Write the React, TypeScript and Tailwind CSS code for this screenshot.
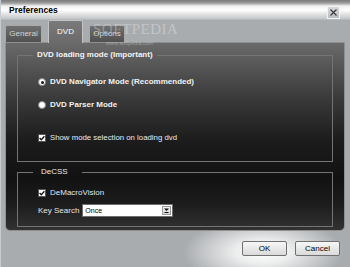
import React from "react";

function Radio({ checked }: { checked?: boolean }) {
  return (
    <div className="w-[8px] h-[8px] rounded-full bg-white border border-[#8a8a8a] flex items-center justify-center shrink-0">
      {checked && <div className="w-[3px] h-[3px] rounded-full bg-[#1a1a1a]" />}
    </div>
  );
}

function Check() {
  return (
    <div className="w-[8px] h-[8px] bg-white border border-[#555] flex items-center justify-center shrink-0">
      <svg width="6" height="6" viewBox="0 0 6 6">
        <path d="M0.6 3 L2.3 4.7 L5.4 1.2" stroke="#111" strokeWidth="1.3" fill="none" />
      </svg>
    </div>
  );
}

export default function App() {
  return (
    <div className="relative w-[350px] h-[267px] overflow-hidden border-l border-[#c9cccf] font-['Liberation_Sans',Arial,sans-serif] text-[8px] leading-[10px] bg-[radial-gradient(ellipse_80px_34px_at_262px_252px,#ffffff_0%,#eceded_35%,#a9acaf_100%)]">
      {/* title bar */}
      <div className="h-[20px] flex justify-between pl-[8px] pr-[10px] border-b border-[#b6b9bc] bg-[linear-gradient(to_bottom,#7a7a7a_0px,#9b9b9b_3px,#f0f0f0_6px,#ffffff_10px,#e4e4e4_14px,#c2c4c6_19px)]">
        <span className="self-center font-bold text-[8.5px] text-black">Preferences</span>
        <div className="self-end w-[13px] h-[13px] border border-[#f4f4f4] bg-[linear-gradient(to_bottom,#d6d8da,#bcbfc2)] flex items-center justify-center">
          <svg width="7" height="7" viewBox="0 0 7 7">
            <path d="M0.5 0.5 L6.5 6.5 M6.5 0.5 L0.5 6.5" stroke="#3a3a3a" strokeWidth="1.2" />
          </svg>
        </div>
      </div>

      {/* tabs */}
      <div className="h-[22px] flex items-end pl-[4px] gap-[6px]">
        <div className="w-[37px] h-[17px] rounded-t-[2px] border border-b-0 border-[#a9a9a9] bg-[linear-gradient(to_bottom,#707070,#505050)] text-[#d4d4d4] flex items-center justify-center">
          General
        </div>
        <div className="relative z-10 w-[35px] h-[23px] mb-[-1px] rounded-t-[2px] border border-b-0 border-[#c4c4c4] bg-[linear-gradient(to_bottom,#7a7a7a,#6a6a6a)] text-white flex items-center justify-center">
          DVD
        </div>
        <div className="w-[36px] h-[17px] rounded-t-[2px] border border-b-0 border-[#a9a9a9] bg-[linear-gradient(to_bottom,#707070,#505050)] text-[#d4d4d4] flex items-center justify-center">
          Options
        </div>
      </div>

      {/* panel */}
      <div className="ml-[4px] mr-[5px] h-[189px] border border-[#8f8f8f] rounded-b-[5px] px-[11px] flex flex-col bg-[linear-gradient(to_bottom,#6a6a6a_0%,#3c3c3c_28%,#1c1c1c_52%,#121212_72%,#1c1c1c_86%,#323232_100%)]">
        <fieldset className="mt-[7px] h-[112px] border border-[#747474] m-0 p-0 min-w-0">
          <legend className="ml-[15px] px-[4px] font-bold text-[#f4f4f4] leading-[10px]">
            DVD loading mode (Important)
          </legend>
          <div className="pl-[20px] pt-[16px] flex flex-col">
            <div className="h-[12px] flex items-center gap-[4px] font-bold text-[#f2f2f2]">
              <Radio checked />
              <span>DVD Navigator Mode (Recommended)</span>
            </div>
            <div className="mt-[11px] h-[12px] flex items-center gap-[4px] font-bold text-[#f2f2f2]">
              <Radio />
              <span>DVD Parser Mode</span>
            </div>
            <div className="mt-[21px] h-[12px] flex items-center gap-[4px] text-[#e6ebf5] text-[7.8px]">
              <Check />
              <span>Show mode selection on loading dvd</span>
            </div>
          </div>
        </fieldset>

        <fieldset className="mt-[5px] h-[60px] border border-[#747474] m-0 p-0 min-w-0">
          <legend className="ml-[15px] pl-[8px] pr-[14px] text-[#ececec] leading-[10px]">DeCSS</legend>
          <div className="pl-[20px] pt-[10px] flex flex-col">
            <div className="h-[12px] flex items-center gap-[4px] text-[#dfe6f5]">
              <Check />
              <span>DeMacroVision</span>
            </div>
            <div className="mt-[5px] h-[13px] flex items-center text-[#e4e4e4]">
              <span>Key Search</span>
              <div className="ml-[3px] w-[91px] h-[13px] bg-white border border-[#6e6e6e] flex items-center justify-between pl-[2px] pr-[1px]">
                <span className="text-[7px] text-black">Once</span>
                <div className="w-[9px] h-[9px] bg-[linear-gradient(to_bottom,#f2f2f2,#d8d8d8)] border border-[#9a9a9a] flex items-center justify-center">
                  <svg width="5" height="5" viewBox="0 0 5 5">
                    <path d="M0 0.5 L5 0.5 L2.5 3 Z" fill="#111" />
                    <rect x="0.5" y="4" width="4" height="1" fill="#111" />
                  </svg>
                </div>
              </div>
            </div>
          </div>
        </fieldset>
      </div>

      {/* buttons */}
      <div className="flex justify-end gap-[8px] pr-[10px] mt-[10px]">
        <button className="w-[45px] h-[15px] rounded-[2px] border border-[#707070] bg-[linear-gradient(to_bottom,#f7f7f7,#dadada)] text-black text-[8px] leading-[13px]">
          OK
        </button>
        <button className="w-[45px] h-[15px] rounded-[2px] border border-[#707070] bg-[linear-gradient(to_bottom,#f7f7f7,#dadada)] text-black text-[8px] leading-[13px]">
          Cancel
        </button>
      </div>

      {/* watermark */}
      <div className="absolute left-[92px] top-[21px] font-['Liberation_Serif',serif] text-[15px] leading-[16px] tracking-[0.5px] text-white/30 pointer-events-none">
        SOFTPEDIA
      </div>
      <div className="absolute left-[105px] top-[40px] text-[5.5px] leading-[6px] text-white/35 pointer-events-none">
        www.softpedia.com
      </div>
    </div>
  );
}
